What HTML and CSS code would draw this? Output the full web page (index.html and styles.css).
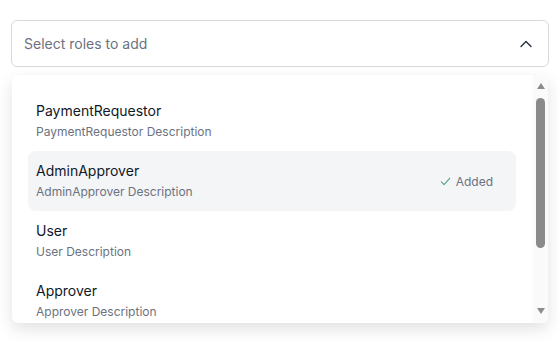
FILE: index.html
```html
<!DOCTYPE html>
<html lang="en">

<head>
    <meta charset="UTF-8">
    <meta name="viewport" content="width=device-width, initial-scale=1.0">
    <title>Select roles</title>
    <link rel="stylesheet" href="styles.css">
</head>

<body>
    <div class="role-select">
        <div class="role-input">
            <span class="placeholder">Select roles to add</span>
            <svg class="chevron" width="12" height="12" viewBox="0 0 12 12" fill="none">
                <path d="M1 8.5L6 3.5L11 8.5" stroke="#1f2937" stroke-width="1.3" stroke-linecap="round" stroke-linejoin="round" />
            </svg>
        </div>

        <div class="role-menu">
            <div class="role-list">
                <div class="role-item">
                    <div class="role-text">
                        <p class="role-name">PaymentRequestor</p>
                        <p class="role-desc">PaymentRequestor Description</p>
                    </div>
                </div>
                <div class="role-item active">
                    <div class="role-text">
                        <p class="role-name">AdminApprover</p>
                        <p class="role-desc">AdminApprover Description</p>
                    </div>
                    <span class="added">
                        <svg width="11" height="11" viewBox="0 0 12 12" fill="none">
                            <path d="M1.5 6.5L4.5 9.5L10.5 2.5" stroke="#4fa686" stroke-width="1.2" stroke-linecap="round" stroke-linejoin="round" />
                        </svg>
                        Added
                    </span>
                </div>
                <div class="role-item">
                    <div class="role-text">
                        <p class="role-name">User</p>
                        <p class="role-desc">User Description</p>
                    </div>
                </div>
                <div class="role-item">
                    <div class="role-text">
                        <p class="role-name">Approver</p>
                        <p class="role-desc">Approver Description</p>
                    </div>
                </div>
            </div>
            <div class="scrollbar">
                <span class="arrow up"></span>
                <div class="track">
                    <div class="thumb"></div>
                </div>
                <span class="arrow down"></span>
            </div>
        </div>
    </div>
</body>

</html>
```

FILE: styles.css
```css
body {
    margin: 0;
    font-family: Inter, 'Noto Sans', sans-serif;
    background-color: #fff;
}

.role-select {
    padding: 20px 9px 19px 11px;
}

.role-input {
    display: flex;
    align-items: center;
    justify-content: space-between;
    height: 45px;
    padding: 0 16px 0 12px;
    border: 1px solid #d6d9de;
    border-radius: 6px;
}

.placeholder {
    font-size: 14px;
    color: #6b7280;
}

.chevron {
    display: block;
}

.role-menu {
    display: flex;
    margin: 8px 1px 0;
    height: 248px;
    overflow: hidden;
    background-color: #fff;
    border-radius: 6px;
    box-shadow: 0 6px 16px rgba(0, 0, 0, 0.12);
}

.role-list {
    flex: 1;
    padding: 16px 17px 0 16px;
    overflow: hidden;
}

.role-item {
    display: flex;
    align-items: center;
    justify-content: space-between;
    padding: 10px 23px 10px 8px;
    border-radius: 8px;
}

.role-item.active {
    background-color: #f4f5f7;
}

.role-name {
    margin: 0;
    font-size: 14px;
    line-height: 20px;
    color: #111827;
}

.role-desc {
    margin: 2px 0 0;
    font-size: 12px;
    line-height: 18px;
    color: #6b7280;
}

.added {
    display: flex;
    align-items: center;
    gap: 5px;
    font-size: 12px;
    color: #6b7280;
}

/* scrollbar drawn by hand, headless chrome hides the native one */
.scrollbar {
    display: flex;
    flex-direction: column;
    align-items: center;
    width: 15px;
    padding: 8px 0 9px;
    box-sizing: border-box;
    background-color: #fafafa;
}

.arrow {
    width: 0;
    height: 0;
    border-left: 4.5px solid transparent;
    border-right: 4.5px solid transparent;
}

.arrow.up {
    border-bottom: 6px solid #8c8c8c;
}

.arrow.down {
    border-top: 6px solid #8c8c8c;
}

.track {
    flex: 1;
    padding-top: 9px;
}

.thumb {
    width: 9px;
    height: 150px;
    border-radius: 5px;
    background-color: #8a8a8a;
}
```
